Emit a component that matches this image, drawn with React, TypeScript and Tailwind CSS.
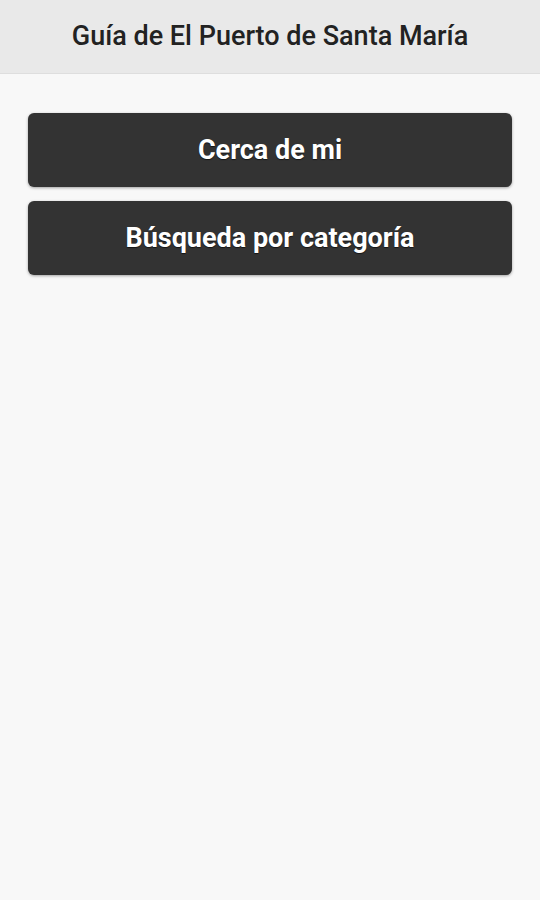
import React from 'react';

const items = ['Cerca de mi', 'Búsqueda por categoría'];

export default function App() {
  return (
    <div className="min-h-[900px] bg-[#f8f8f8] font-['Roboto',sans-serif]">
      <header className="h-[74px] flex items-center justify-center bg-[#e9e9e9] border-b border-[#dedede]">
        <h1 className="text-[27px] text-[#222] font-medium">Guía de El Puerto de Santa María</h1>
      </header>

      <div className="flex flex-col gap-[14px] px-[28px] pt-[39px]">
        {items.map((label) => (
          <button
            key={label}
            className="h-[74px] w-full rounded-[6px] bg-[#333] text-white text-[27px] font-bold shadow-[0_1px_3px_rgba(0,0,0,0.35)] [text-shadow:0_1px_1px_rgba(0,0,0,0.6)]"
          >
            {label}
          </button>
        ))}
      </div>
    </div>
  );
}
